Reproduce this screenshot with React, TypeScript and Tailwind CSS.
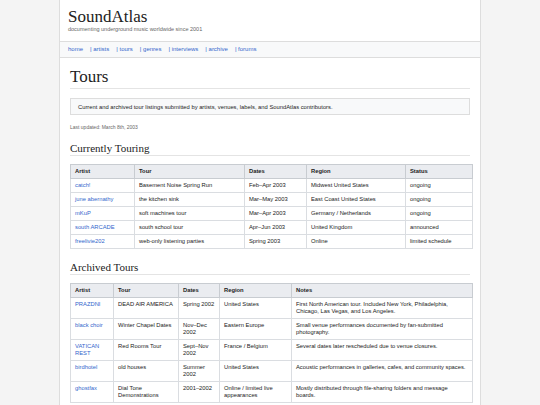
import React from 'react';

const serif = { fontFamily: '"Liberation Serif", "Times New Roman", serif' };

const current = [
  ['catch!', 'Basement Noise Spring Run', 'Feb–Apr 2003', 'Midwest United States', 'ongoing'],
  ['june abernathy', 'the kitchen sink', 'Mar–May 2003', 'East Coast United States', 'ongoing'],
  ['mKuP', 'soft machines tour', 'Mar–Apr 2003', 'Germany / Netherlands', 'ongoing'],
  ['south ARCADE', 'south school tour', 'Apr–Jun 2003', 'United Kingdom', 'announced'],
  ['freelivie202', 'web-only listening parties', 'Spring 2003', 'Online', 'limited schedule'],
];

const archived = [
  ['PRAZDNI', 'DEAD AIR AMERICA', 'Spring 2002', 'United States', 'First North American tour. Included New York, Philadelphia, Chicago, Las Vegas, and Los Angeles.'],
  ['black choir', 'Winter Chapel Dates', 'Nov–Dec 2002', 'Eastern Europe', 'Small venue performances documented by fan-submitted photography.'],
  ['VATICAN REST', 'Red Rooms Tour', 'Sept–Nov 2002', 'France / Belgium', 'Several dates later rescheduled due to venue closures.'],
  ['birdhotel', 'old houses', 'Summer 2002', 'United States', 'Acoustic performances in galleries, cafes, and community spaces.'],
  ['ghostfax', 'Dial Tone Demonstrations', '2001–2002', 'Online / limited live appearances', 'Mostly distributed through file-sharing folders and message boards.'],
];

const nav = ['home', 'artists', 'tours', 'genres', 'interviews', 'archive', 'forums'];

function DataTable({ head, rows, widths }: { head: string[]; rows: string[][]; widths: string[] }) {
  return (
    <table className="w-full table-fixed border-collapse border border-[#c8ccd1] text-[5.8px] leading-[7px] text-[#222]">
      <colgroup>
        {widths.map((w, i) => (
          <col key={i} className={w} />
        ))}
      </colgroup>
      <thead>
        <tr className="bg-[#eaecf0]">
          {head.map((h) => (
            <th key={h} className="border border-[#c8ccd1] px-[4px] py-[3px] text-left font-bold">
              {h}
            </th>
          ))}
        </tr>
      </thead>
      <tbody>
        {rows.map((r) => (
          <tr key={r[0]}>
            {r.map((c, i) => (
              <td key={i} className="border border-[#dadde1] px-[4px] py-[3px] align-top">
                {i === 0 ? <a className="text-[#3366cc]">{c}</a> : c}
              </td>
            ))}
          </tr>
        ))}
      </tbody>
    </table>
  );
}

export default function App() {
  return (
    <div className="min-h-[405px] bg-[#f4f4f4]" style={{ fontFamily: '"Liberation Sans", Arial, sans-serif' }}>
      <div className="mx-auto min-h-[405px] w-[422px] border-x border-[#dddddd] bg-white">
        <header className="px-[8px] pt-[7px] pb-[8px]">
          <h1 className="text-[17px] leading-[20px] text-[#222]" style={serif}>
            SoundAtlas
          </h1>
          <p className="mt-[-1px] text-[5.5px] leading-[7px] text-[#666]">documenting underground music worldwide since 2001</p>
        </header>
        <nav className="flex gap-[7px] border-y border-[#dddddd] bg-[#f8f9fa] px-[8px] py-[4px] text-[6px] leading-[7px] text-[#3366cc]">
          {nav.map((n, i) => (
            <a key={n}>{i === 0 ? n : `| ${n}`}</a>
          ))}
        </nav>
        <main className="px-[10px] pt-[9px] pb-[10px]">
          <h2 className="border-b border-[#e4e4e4] pb-[1px] text-[17px] leading-[20px] text-[#222]" style={serif}>
            Tours
          </h2>
          <div className="mt-[9px] border border-[#dddddd] bg-[#f8f9fa] px-[7px] py-[3.5px] text-[5.8px] leading-[8px] text-[#222]">
            Current and archived tour listings submitted by artists, venues, labels, and SoundAtlas contributors.
          </div>
          <p className="mt-[9px] text-[5px] leading-[7px] text-[#666]">Last updated: March 8th, 2003</p>

          <h3 className="mt-[11px] border-b border-[#e4e4e4] text-[11px] leading-[13px] text-[#222]" style={serif}>
            Currently Touring
          </h3>
          <div className="mt-[8px]">
            <DataTable
              head={['Artist', 'Tour', 'Dates', 'Region', 'Status']}
              rows={current}
              widths={['w-[64px]', 'w-[110px]', 'w-[62px]', 'w-[99px]', 'w-[67px]']}
            />
          </div>

          <h3 className="mt-[12px] border-b border-[#e4e4e4] text-[11px] leading-[13px] text-[#222]" style={serif}>
            Archived Tours
          </h3>
          <div className="mt-[8px]">
            <DataTable
              head={['Artist', 'Tour', 'Dates', 'Region', 'Notes']}
              rows={archived}
              widths={['w-[43px]', 'w-[65px]', 'w-[41px]', 'w-[72px]', 'w-[181px]']}
            />
          </div>
        </main>
      </div>
    </div>
  );
}
